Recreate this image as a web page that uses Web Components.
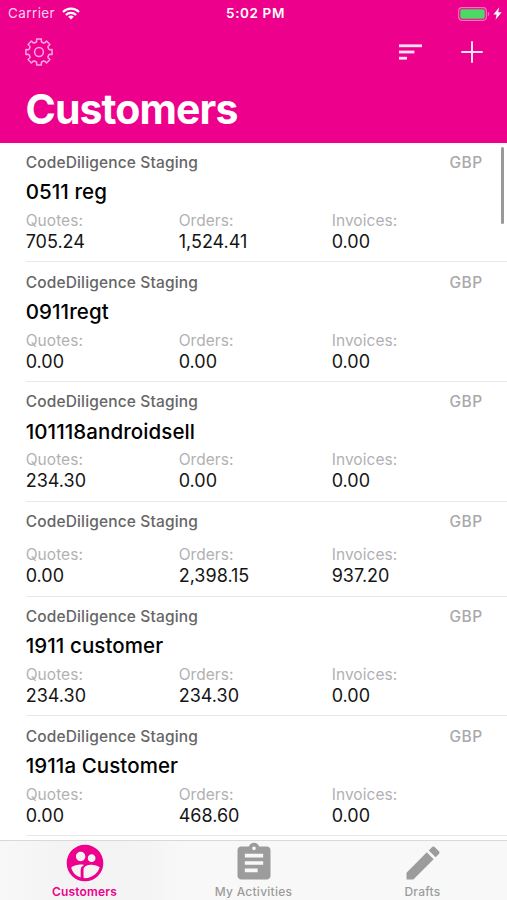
<!DOCTYPE html>
<html lang="en">
<head>
<meta charset="utf-8">
<meta name="viewport" content="width=device-width, initial-scale=1">
<title>Customers</title>
<style>
  body {
    margin: 0;
    font-family: Inter, "Liberation Sans", sans-serif;
    background: #fff;
  }
</style>
</head>
<body>
<customers-app></customers-app>

<script>
class StatusBar extends HTMLElement {
  connectedCallback() {
    this.attachShadow({ mode: 'open' });
    this.shadowRoot.innerHTML = `
      <style>
        :host {
          display: grid;
          grid-template-columns: 1fr auto 1fr;
          align-items: center;
          height: 27px;
          padding: 0 5px 0 8px;
          color: #fff;
          font-size: 13.5px;
          line-height: 27px;
        }
        .left, .right {
          display: flex;
          align-items: center;
        }
        .left {
          gap: 7px;
          color: #ffd0ee;
          letter-spacing: 0.4px;
        }
        .right {
          justify-content: flex-end;
          gap: 3px;
        }
        .time {
          font-weight: 600;
          font-size: 13.5px;
          letter-spacing: 0.6px;
          padding-left: 1px;
        }
        svg {
          display: block;
        }
      </style>
      <div class="left">
        <span>Carrier</span>
        <svg width="18" height="13" viewBox="0 0 18 13" fill="none" stroke="#fff" stroke-width="2.1">
          <path d="M1 4.9a11.4 11.4 0 0 1 16 0"/>
          <path d="M3.9 8a7.3 7.3 0 0 1 10.2 0"/>
          <path d="M9 12.6 6.2 9.8a4 4 0 0 1 5.6 0z" fill="#fff" stroke="none"/>
        </svg>
      </div>
      <div class="time">5:02 PM</div>
      <div class="right">
        <svg width="32" height="14" viewBox="0 0 32 14">
          <rect x=".7" y=".7" width="27.6" height="12.6" rx="3.2" fill="none" stroke="#f673c4" stroke-width="1.2"/>
          <rect x="2.3" y="2.3" width="24.4" height="9.4" rx="1.6" fill="#4cd964"/>
          <path d="M29.8 4.8a2.4 2.4 0 0 1 0 4.4z" fill="#f673c4"/>
        </svg>
        <svg width="9" height="13" viewBox="0 0 8 12" fill="#fff">
          <path d="M5.6.2.2 6.9h3L2.2 11.8l5.6-7H4.6z"/>
        </svg>
      </div>
    `;
  }
}
customElements.define('status-bar', StatusBar);

// outline of an eight-toothed cog centred on 15,15
function cogPath() {
  const points = [];
  for (let i = 0; i < 8; i++) {
    const mid = i * Math.PI / 4;
    [[-0.29, 10.2], [-0.22, 10.8], [-0.18, 13.3], [0.18, 13.3], [0.22, 10.8], [0.29, 10.2]].forEach(([da, r]) => {
      points.push((15 + r * Math.sin(mid + da)).toFixed(2) + ' ' + (15 - r * Math.cos(mid + da)).toFixed(2));
    });
  }
  return 'M' + points.join('L') + 'Z';
}

class NavHeader extends HTMLElement {
  connectedCallback() {
    this.attachShadow({ mode: 'open' });
    this.shadowRoot.innerHTML = `
      <style>
        :host {
          display: block;
          height: 142.6px;
          background: #ed008b;
          color: #fff;
        }
        .actions {
          display: flex;
          align-items: center;
          height: 50px;
          padding: 0 24px;
        }
        .sort {
          margin-left: auto;
          margin-right: 39px;
        }
        h1 {
          margin: 5px 0 0 25.5px;
          font-size: 41px;
          line-height: 54px;
          font-weight: 700;
          letter-spacing: -0.9px;
        }
        svg {
          display: block;
        }
      </style>
      <status-bar></status-bar>
      <div class="actions">
        <svg width="30" height="30" viewBox="0 0 30 30" fill="none" stroke="#ffa5df" stroke-width="1.5" stroke-linejoin="round">
          <path d="${cogPath()}"/>
          <circle cx="15" cy="15" r="4.4"/>
        </svg>
        <svg class="sort" width="23" height="16" viewBox="0 0 23 16" fill="#ffe3f5">
          <rect x="0" y="0.4" width="23" height="2.8"/>
          <rect x="0" y="6.6" width="15.4" height="2.8"/>
          <rect x="0" y="12.8" width="8" height="2.8"/>
        </svg>
        <svg width="22" height="22" viewBox="0 0 22 22" stroke="#ffe3f5" stroke-width="2">
          <path d="M11 .3v21.4M.3 11h21.4"/>
        </svg>
      </div>
      <h1><slot></slot></h1>
    `;
  }
}
customElements.define('nav-header', NavHeader);

class CustomerRow extends HTMLElement {
  connectedCallback() {
    const get = (name) => this.getAttribute(name) || '';
    this.attachShadow({ mode: 'open' });
    this.shadowRoot.innerHTML = `
      <style>
        :host {
          display: block;
          margin-left: 25.7px;
          padding: 10.5px 0 8.2px;
          box-sizing: border-box;
          border-bottom: 1px solid #e8e8ea;
        }
        .top {
          display: flex;
          justify-content: space-between;
          padding-right: 24.5px;
          font-size: 15.5px;
          line-height: 20px;
          font-weight: 500;
          letter-spacing: 0.15px;
          color: #666;
        }
        .currency {
          color: #a9a9ab;
          letter-spacing: 0.4px;
        }
        .name {
          margin: 5.2px 0;
          min-height: 3px;
          font-size: 20.5px;
          line-height: 27.6px;
          font-weight: 500;
          letter-spacing: 0.08px;
          color: #000;
        }
        .totals {
          display: grid;
          grid-template-columns: repeat(3, 153px);
        }
        .label {
          font-size: 15.5px;
          line-height: 20px;
          letter-spacing: 0.05px;
          color: #b1b1b3;
        }
        .value {
          font-size: 18px;
          line-height: 22px;
          color: #151515;
        }
      </style>
      <div class="top">
        <span>${get('company')}</span>
        <span class="currency">GBP</span>
      </div>
      <div class="name"><slot></slot></div>
      <div class="totals">
        <div><div class="label">Quotes:</div><div class="value">${get('quotes')}</div></div>
        <div><div class="label">Orders:</div><div class="value">${get('orders')}</div></div>
        <div><div class="label">Invoices:</div><div class="value">${get('invoices')}</div></div>
      </div>
    `;
  }
}
customElements.define('customer-row', CustomerRow);

class TabItem extends HTMLElement {
  connectedCallback() {
    this.attachShadow({ mode: 'open' });
    this.shadowRoot.innerHTML = `
      <style>
        :host {
          display: flex;
          flex-direction: column;
          align-items: center;
          color: #9c9c9c;
          font-size: 12px;
          line-height: 14px;
          font-weight: 500;
          letter-spacing: 0.25px;
        }
        :host([active]) {
          color: #ed008b;
          font-weight: 600;
          letter-spacing: 0.15px;
        }
        ::slotted(svg) {
          display: block;
          width: 44px;
          height: 44px;
          fill: currentColor;
        }
      </style>
      <slot name="icon"></slot>
      <span><slot></slot></span>
    `;
  }
}
customElements.define('tab-item', TabItem);

class TabBar extends HTMLElement {
  connectedCallback() {
    this.attachShadow({ mode: 'open' });
    this.shadowRoot.innerHTML = `
      <style>
        :host {
          display: grid;
          grid-template-columns: repeat(3, 1fr);
          height: 60px;
          box-sizing: border-box;
          border-top: 1px solid #d9d9d9;
          background: linear-gradient(90deg, #f8f8f8, #f3f3f3 14%, #f4f4f4 28%, #f8f8f8 36%);
          overflow: hidden;
        }
      </style>
      <slot></slot>
    `;
  }
}
customElements.define('tab-bar', TabBar);

class CustomersApp extends HTMLElement {
  connectedCallback() {
    this.attachShadow({ mode: 'open' });
    this.shadowRoot.innerHTML = `
      <style>
        :host {
          display: flex;
          flex-direction: column;
          height: 900px;
          overflow: hidden;
        }
        nav-header, tab-bar {
          flex: none;
        }
        .list {
          flex: 1;
          min-height: 0;
          overflow: hidden;
          position: relative;
        }
        .thumb {
          position: absolute;
          top: 4px;
          right: 3.5px;
          width: 3px;
          height: 77.5px;
          border-radius: 2px;
          background: #999;
        }
      </style>
      <nav-header>Customers</nav-header>
      <div class="list">
        <customer-row company="CodeDiligence Staging" quotes="705.24" orders="1,524.41" invoices="0.00">0511 reg</customer-row>
        <customer-row company="CodeDiligence Staging" quotes="0.00" orders="0.00" invoices="0.00">0911regt</customer-row>
        <customer-row company="CodeDiligence Staging" quotes="234.30" orders="0.00" invoices="0.00">101118androidsell</customer-row>
        <customer-row company="CodeDiligence Staging" quotes="0.00" orders="2,398.15" invoices="937.20"></customer-row>
        <customer-row company="CodeDiligence Staging" quotes="234.30" orders="234.30" invoices="0.00">1911 customer</customer-row>
        <customer-row company="CodeDiligence Staging" quotes="0.00" orders="468.60" invoices="0.00">1911a Customer</customer-row>
        <div class="thumb"></div>
      </div>
      <tab-bar>
        <tab-item active>
          <svg slot="icon" viewBox="0 0 24 24"><path d="M12 2C6.48 2 2 6.48 2 12s4.48 10 10 10 10-4.48 10-10S17.52 2 12 2zM15.63 7.25c1.16 0 2.1.94 2.1 2.1s-.94 2.1-2.1 2.1-2.1-.94-2.1-2.1c-.01-1.16.93-2.1 2.1-2.1zM9.63 5.92c1.41 0 2.56 1.15 2.56 2.56s-1.15 2.56-2.56 2.56-2.56-1.15-2.56-2.56S8.22 5.92 9.63 5.92zM9.63 14.05v5.91c-2.6-.8-4.68-2.86-5.11-5.46 1.04-1.11 3.64-1.68 5.11-1.68.53 0 1.2.08 1.9.22-1.64.87-1.9 2.02-1.9 2.71zM12 20.25c-.27 0-.53-.01-.79-.04v-4.81c0-1.68 2.6-2.44 4.42-2.44 1.32 0 3.6.49 4.35 1.49C18.9 17.7 15.76 20.25 12 20.25z"/></svg>
          Customers
        </tab-item>
        <tab-item>
          <svg slot="icon" viewBox="0 0 24 24"><path d="M19 3h-4.18C14.4 1.84 13.3 1 12 1c-1.3 0-2.4.84-2.82 2H5c-1.1 0-2 .9-2 2v14c0 1.1.9 2 2 2h14c1.1 0 2-.9 2-2V5c0-1.1-.9-2-2-2zm-7 0c.55 0 1 .45 1 1s-.45 1-1 1-1-.45-1-1 .45-1 1-1zm2 14H7v-2h7v2zm3-4H7v-2h10v2zm0-4H7V7h10v2z"/></svg>
          My Activities
        </tab-item>
        <tab-item>
          <svg slot="icon" viewBox="0 0 24 24"><path d="M3 17.25V21h3.75L17.81 9.94l-3.75-3.75L3 17.25zM20.71 7.04c.39-.39.39-1.02 0-1.41l-2.34-2.34c-.39-.39-1.02-.39-1.41 0l-1.83 1.83 3.75 3.75 1.83-1.83z"/></svg>
          Drafts
        </tab-item>
      </tab-bar>
    `;
  }
}
customElements.define('customers-app', CustomersApp);
</script>
</body>
</html>
